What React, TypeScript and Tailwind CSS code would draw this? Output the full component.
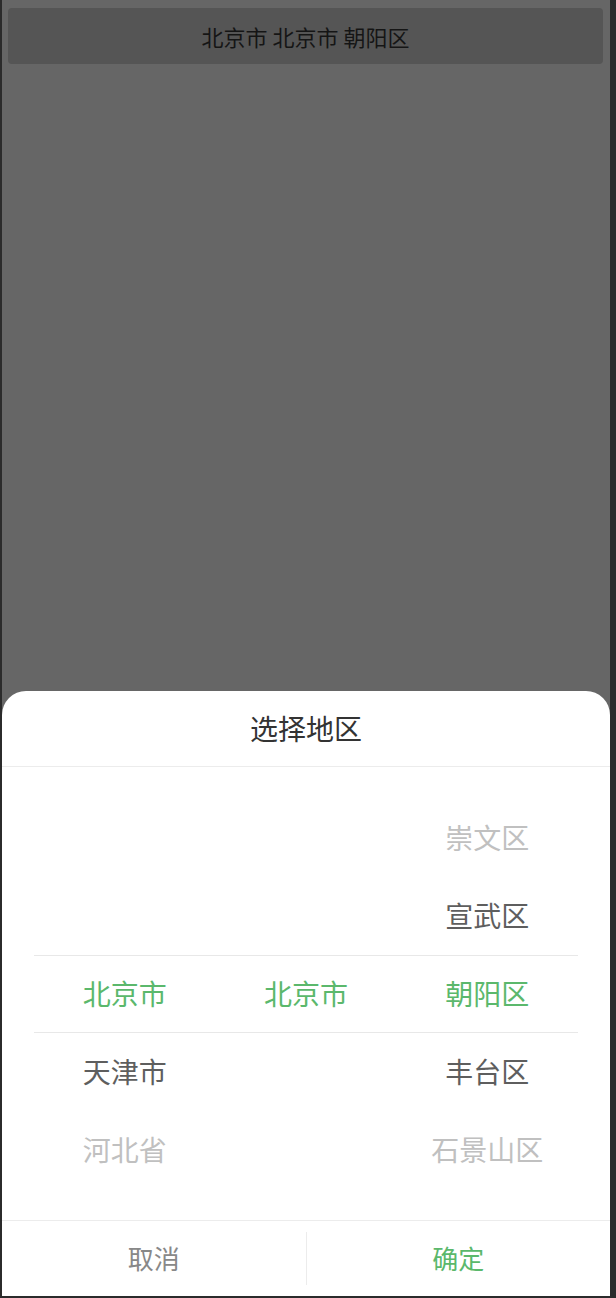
import React from 'react';

const FONT = { fontFamily: '"Noto Sans CJK SC", "Noto Sans", sans-serif' };

type Cell = { text: string; tone: 'faint' | 'near' | 'active' | 'empty' };

const ROWS: Cell[][] = [
  [
    { text: '', tone: 'empty' },
    { text: '', tone: 'empty' },
    { text: '崇文区', tone: 'faint' }
  ],
  [
    { text: '', tone: 'empty' },
    { text: '', tone: 'empty' },
    { text: '宣武区', tone: 'near' }
  ],
  [
    { text: '北京市', tone: 'active' },
    { text: '北京市', tone: 'active' },
    { text: '朝阳区', tone: 'active' }
  ],
  [
    { text: '天津市', tone: 'near' },
    { text: '', tone: 'empty' },
    { text: '丰台区', tone: 'near' }
  ],
  [
    { text: '河北省', tone: 'faint' },
    { text: '', tone: 'empty' },
    { text: '石景山区', tone: 'faint' }
  ]
];

const TONE_CLASS = {
  faint: 'text-[#c0c0c0]',
  near: 'text-[#5e5e5e]',
  active: 'text-[#5bb86c]',
  empty: ''
} as const;

function PickerRow({ cells, selected }: { cells: Cell[]; selected: boolean }) {
  return (
    <div
      className={
        selected
          ? 'grid grid-cols-3 h-[78px] border-y border-[#e8e8e8]'
          : 'grid grid-cols-3 h-[78px]'
      }
    >
      {cells.map((c, i) => (
        <div
          key={i}
          className={`flex items-center justify-center pb-[2px] text-[28px] leading-none ${TONE_CLASS[c.tone]}`}
        >
          {c.text}
        </div>
      ))}
    </div>
  );
}

export default function App() {
  return (
    <div
      className="w-[616px] h-[1298px] bg-[#2b2b2b] pl-[2px] pr-[6px] pb-[2px] flex"
      style={FONT}
    >
      <div className="flex-1 flex flex-col bg-[#666666]">
        {/* trigger bar, dimmed by the overlay */}
        <div className="ml-[6px] mr-[7px] mt-[8px] h-[56px] rounded-[4px] bg-[#555555] flex items-center justify-center text-[22px] text-[#151515]">
          北京市 北京市 朝阳区
        </div>

        {/* bottom sheet */}
        <div className="mt-auto bg-white rounded-t-[24px] flex flex-col">
          <div className="h-[76px] flex items-center justify-center pb-[2px] border-b border-[#ececec] text-[28px] text-[#333333]">
            选择地区
          </div>

          <div className="mx-[32px] pt-[32px] pb-[31px]">
            {ROWS.map((row, i) => (
              <PickerRow key={i} cells={row} selected={i === 2} />
            ))}
          </div>

          <div className="h-[76px] flex border-t border-[#ececec]">
            <button className="flex-1 flex items-center justify-center pb-[2px] text-[26px] text-[#888888]">
              取消
            </button>
            <div className="w-px my-[11px] bg-[#ececec]" />
            <button className="flex-1 flex items-center justify-center pb-[2px] text-[26px] text-[#5bb86c]">
              确定
            </button>
          </div>
        </div>
      </div>
    </div>
  );
}
